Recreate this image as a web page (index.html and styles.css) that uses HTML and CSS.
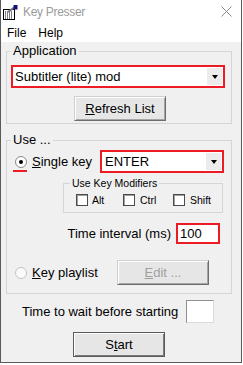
FILE: index.html
```html
<!DOCTYPE html>
<html>
<head>
<meta charset="utf-8">
<link rel="stylesheet" href="styles.css">
</head>
<body>
<div class="window">
  <div class="titlebar">
    <svg class="app-icon" width="16" height="16" viewBox="0 0 16 16">
      <rect x="1.5" y="5.5" width="11" height="10" fill="#fff" stroke="#000"/>
      <path d="M3 8h8M3 10h8M3 12h8M3 14h8" stroke="#000" stroke-width="1" stroke-dasharray="1 1"/>
      <path d="M6 8L12 3.5" stroke="#777" stroke-width="2"/>
      <rect x="11.5" y="1" width="4" height="4.5" fill="#10107a"/>
    </svg>
    <span class="title">Key Presser</span>
    <svg class="close" width="11" height="11" viewBox="0 0 11 11">
      <path d="M0.5 0.5L10.5 10.5M10.5 0.5L0.5 10.5" stroke="#8a8a8a" stroke-width="1"/>
    </svg>
  </div>
  <div class="menubar"><span class="menu-item">File</span><span class="menu-item">Help</span></div>
  <div class="client">
    <fieldset class="group app-group">
      <legend>Application</legend>
      <div class="combo red app-combo">
        <span class="combo-text">Subtitler (lite) mod</span>
        <span class="combo-btn"><i class="arrow"></i></span>
      </div>
      <button class="btn refresh-btn"><u>R</u>efresh List</button>
    </fieldset>

    <fieldset class="group use-group">
      <legend>Use ...</legend>
      <div class="row single-row">
        <span class="radio-wrap marked"><span class="radio checked"></span></span>
        <span class="radio-label"><u>S</u>ingle key</span>
        <div class="combo red key-combo">
          <span class="combo-text">ENTER</span>
          <span class="combo-btn"><i class="arrow"></i></span>
        </div>
      </div>
      <fieldset class="group mod-group">
        <legend>Use Key Modifiers</legend>
        <div class="checks">
          <span class="check c-alt"><span class="box"></span>Alt</span>
          <span class="check c-ctrl"><span class="box"></span>Ctrl</span>
          <span class="check c-shift"><span class="box"></span>Shift</span>
        </div>
      </fieldset>
      <div class="row interval-row">
        <span>Time interval (ms)</span>
        <span class="field red interval-field">100</span>
      </div>
      <div class="row playlist-row">
        <span class="radio-wrap"><span class="radio off"></span></span>
        <span class="radio-label"><u>K</u>ey playlist</span>
        <button class="btn disabled edit-btn"><u>E</u>dit ...</button>
      </div>
    </fieldset>

    <div class="wait-row">
      <span>Time to wait before starting</span>
      <span class="field plain"></span>
    </div>
    <button class="btn default start-btn">S<u>t</u>art</button>
  </div>
</div>
</body>
</html>
```
FILE: styles.css
```css
body {
  margin: 0;
  background: #fff;
  font-family: "Liberation Sans", Arial, sans-serif;
  font-size: 13px;
  color: #000;
}
u {
  text-decoration: underline;
  text-underline-offset: 1px;
}
.window {
  width: 242px;
  height: 363px;
  box-sizing: border-box;
  border-left: 1px solid #5a5a5a;
  border-right: 1px solid #5a5a5a;
  border-bottom: 1px solid #5a5a5a;
  display: flex;
  flex-direction: column;
  background: #fff;
}
.titlebar {
  height: 23px;
  flex: none;
  display: flex;
  align-items: center;
  padding-left: 1px;
}
.app-icon { margin-top: 1px; }
.title {
  margin-left: 5px;
  font-size: 12px;
  color: #9a9a9a;
  letter-spacing: -0.3px;
}
.close {
  margin-left: auto;
  margin-right: 9px;
  margin-top: 0;
}
.menubar {
  height: 19px;
  flex: none;
  display: flex;
  align-items: center;
  font-size: 12px;
  padding-left: 6px;
}
.menu-item { margin-right: 12px; }
.client {
  flex: 1;
  background: #f0f0f0;
  padding: 1px 0 0 5px;
}
.group {
  margin: 0;
  border: 1px solid #d5d5d5;
  box-sizing: border-box;
  min-inline-size: 0;
}
.group > legend {
  padding: 0 2px 2px;
  line-height: 15px;
}
.app-group {
  width: 226px;
  padding: 5px 6px 2px 4px;
}
.combo {
  display: flex;
  align-items: stretch;
  background: #fff;
  box-sizing: border-box;
  height: 23px;
}
.red { border: 2px solid #ed1c24; }
.combo-text {
  flex: 1;
  display: flex;
  align-items: center;
  padding-left: 2px;
}
.combo-btn {
  width: 15px;
  margin: 1px 1px 1px 0;
  background: #ececec;
  display: flex;
  align-items: center;
  justify-content: center;
}
.arrow {
  width: 0;
  height: 0;
  border-left: 3.5px solid transparent;
  border-right: 3.5px solid transparent;
  border-top: 4px solid #000;
}
.app-combo { width: 214px; }
.btn {
  font-family: inherit;
  font-size: 13px;
  color: #000;
  width: 92px;
  height: 25px;
  padding: 0;
  background: #e6e6e6;
  border: 1px solid;
  border-color: #cfcfcf #6d6d6d #6d6d6d #cfcfcf;
  box-shadow: inset 1px 1px #fff, inset -1px -1px #a5a5a5;
  display: block;
}
.refresh-btn { margin: 8px 0 0 63px; }
.use-group {
  width: 226px;
  margin-top: 8px;
  padding: 1px 7px 8px 4px;
}
.row {
  display: flex;
  align-items: center;
}
.single-row { height: 23px; }
.radio-wrap {
  position: relative;
  display: flex;
  margin-left: 4px;
}
.marked::after {
  content: "";
  position: absolute;
  left: -2px;
  width: 14px;
  top: 14px;
  height: 2px;
  background: #ed1c24;
}
.radio {
  width: 12px;
  height: 12px;
  box-sizing: border-box;
  border-radius: 50%;
  border: 1px solid #8a8a8a;
  background: #fff;
  display: flex;
  align-items: center;
  justify-content: center;
}
.radio.checked::before {
  content: "";
  width: 4px;
  height: 4px;
  border-radius: 50%;
  background: #000;
}
.radio.off { border-color: #c4c4c4; background: #fbfbfb; }
.radio-label { margin-left: 5px; }
.key-combo {
  width: 124px;
  margin-left: auto;
}
.key-combo .combo-text { padding-left: 3px; }
.mod-group {
  width: 160px;
  margin: 4px 0 0 52px;
  padding: 5px 0 6px 6px;
  font-size: 10.5px;
}
.mod-group > legend {
  line-height: 12px;
  padding: 0 2px;
}
.checks {
  display: flex;
  padding-left: 6px;
  height: 12px;
  align-items: center;
}
.check {
  display: flex;
  align-items: center;
}
.c-alt { width: 47px; }
.c-ctrl { width: 50px; }
.box {
  width: 12px;
  height: 12px;
  box-sizing: border-box;
  border: 1px solid #4a4a4a;
  box-shadow: inset 1px 1px #a0a0a0;
  background: #fff;
  margin-right: 4px;
}
.c-ctrl .box, .c-shift .box { margin-right: 5px; }
.interval-row {
  justify-content: flex-end;
  margin: 10px 4px 0 0;
}
.field {
  box-sizing: border-box;
  background: #fff;
  display: flex;
  align-items: center;
}
.interval-field {
  width: 44px;
  height: 21px;
  margin-left: 5px;
  padding-left: 2px;
}
.playlist-row { margin-top: 16px; }
.edit-btn {
  margin-left: auto;
  margin-right: 15px;
}
.btn.disabled { color: #a0a0a0; }
.wait-row {
  display: flex;
  align-items: center;
  margin-top: 6px;
  padding-left: 16px;
  gap: 8px;
}
.field.plain {
  width: 28px;
  height: 23px;
  border: 1px solid;
  border-color: #8f8f8f #dadada #dadada #8f8f8f;
}
.start-btn {
  margin: 9px 0 0 67px;
}
.btn.default {
  border: 1px solid #5a5a5a;
  box-shadow: inset 1px 1px #fff, inset -1px -1px #7a7a7a;
}
```
